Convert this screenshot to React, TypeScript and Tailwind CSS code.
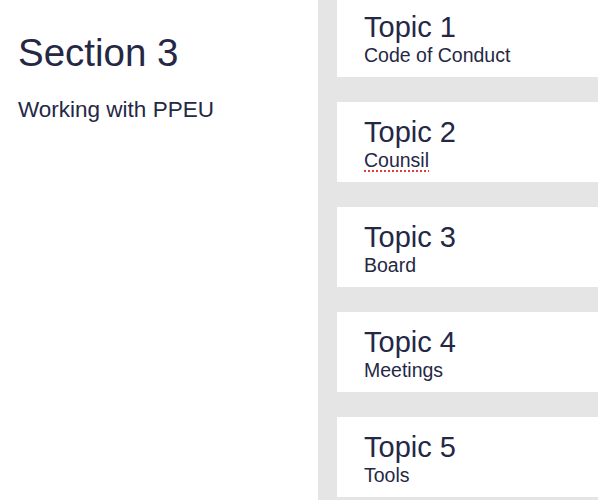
import React from "react";

const topics = [
  { title: "Topic 1", sub: "Code of Conduct" },
  { title: "Topic 2", sub: "Counsil", misspelled: true },
  { title: "Topic 3", sub: "Board" },
  { title: "Topic 4", sub: "Meetings" },
  { title: "Topic 5", sub: "Tools" },
];

export default function App() {
  return (
    <div
      className="flex h-[500px] w-[598px] overflow-hidden bg-white text-[#252845]"
      style={{ fontFamily: '"Liberation Sans", Arial, sans-serif' }}
    >
      <div className="w-[318px] shrink-0 pl-[18px] pt-[31px]">
        <h1 className="text-[38.5px] leading-[44px]">Section 3</h1>
        <p className="mt-[22px] text-[22.5px] leading-[26px]">Working with PPEU</p>
      </div>
      <div className="flex flex-1 flex-col gap-[25px] bg-[#e5e5e5] pl-[19px]">
        {topics.map((t, i) => (
          <div
            key={t.title}
            className={`h-[80px] shrink-0 bg-white pl-[27px] pt-[15px] ${i === 0 ? "-mt-[3px]" : ""}`}
          >
            <div className="text-[29px] leading-[30px]">{t.title}</div>
            <div className="mt-[3px] text-[19.5px] leading-[20px]">
              {t.misspelled ? (
                <span className="underline decoration-dotted decoration-[#e53935] decoration-2 underline-offset-[3px]">
                  {t.sub}
                </span>
              ) : (
                t.sub
              )}
            </div>
          </div>
        ))}
      </div>
    </div>
  );
}
